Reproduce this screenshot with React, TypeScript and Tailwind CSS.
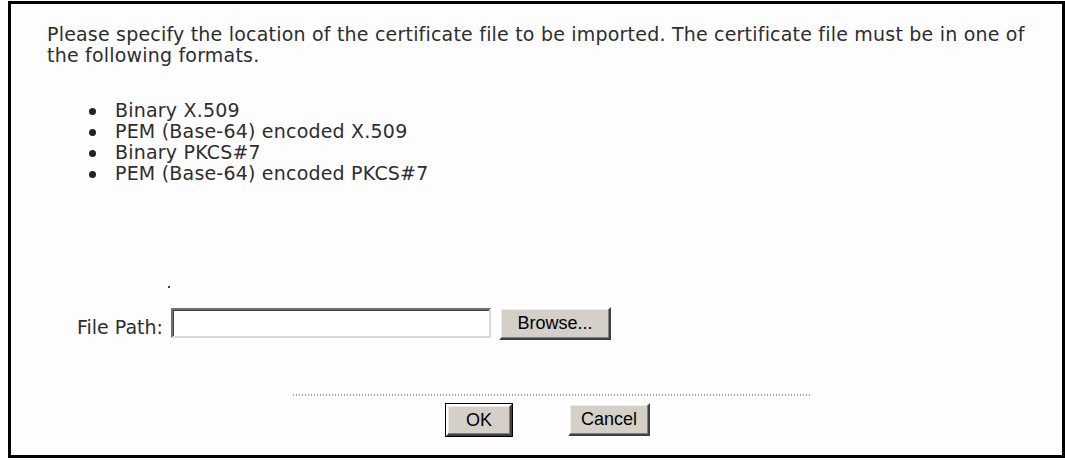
export default function App() {
  const formats = [
    "Binary X.509",
    "PEM (Base-64) encoded X.509",
    "Binary PKCS#7",
    "PEM (Base-64) encoded PKCS#7",
  ];

  // classic win98 style bevels
  const raised =
    "border-t-white border-l-white border-r-[#404040] border-b-[#404040] shadow-[inset_-1px_-1px_0_#808080,inset_1px_1px_0_#ecebe6]";

  return (
    <div className="w-[1065px] h-[460px] bg-white pt-[1px] pl-[8px]">
      <div
        className="w-[1057px] h-[457px] border-[3px] border-black bg-[#fdfdfd] text-[#2e2e2e] flex flex-col"
        style={{ fontFamily: "'DejaVu Sans', Verdana, sans-serif" }}
      >
        {/* Intro */}
        <p className="pl-[36px] pr-[36px] pt-[20px] text-[19px] leading-[21px] tracking-[0.2px]">
          Please specify the location of the certificate file to be imported. The certificate file must be in one of
          the following formats.
        </p>

        {/* Format list */}
        <ul className="mt-[34px] pl-[78px] text-[19px] leading-[21px] tracking-[0.2px]">
          {formats.map((f) => (
            <li key={f} className="flex items-start">
              <span className="mt-[8px] w-[7px] h-[7px] rounded-full bg-[#222]" />
              <span className="ml-[19px]">{f}</span>
            </li>
          ))}
        </ul>

        {/* stray dot */}
        <div className="mt-[102px] pl-[157px] h-[2px]">
          <div className="w-[2px] h-[2px] bg-[#444]" />
        </div>

        {/* File Path row */}
        <div className="mt-[19px] pl-[66px] flex items-start">
          <span className="mt-[10px] text-[19px] leading-[21px]">File Path:</span>
          <div className="ml-[8px] mt-[1px] w-[320px] h-[30px] bg-white border-2 border-t-[#707070] border-l-[#707070] border-r-[#dcdad4] border-b-[#dcdad4] shadow-[inset_1px_1px_0_#404040]" />
          <button
            className={`ml-[8px] w-[112px] h-[33px] bg-[#d4d0c8] border-2 ${raised} text-[18px] text-black`}
            style={{ fontFamily: "'Liberation Sans', Arial, sans-serif" }}
          >
            Browse...
          </button>
        </div>

        {/* Divider */}
        <div className="mt-[54px] ml-[282px] w-[517px] h-[2px] bg-[repeating-linear-gradient(90deg,#a4a4a4_0_1px,transparent_1px_3px)]" />

        {/* Buttons */}
        <div
          className="mt-[7px] pl-[434px] flex items-start gap-[55px]"
          style={{ fontFamily: "'Liberation Sans', Arial, sans-serif" }}
        >
          <div className="border border-black">
            <button className={`w-[66px] h-[32px] bg-[#d4d0c8] border-2 ${raised} text-[18px] text-black`}>OK</button>
          </div>
          <button className={`w-[82px] h-[33px] bg-[#d4d0c8] border-2 ${raised} text-[18px] text-black`}>
            Cancel
          </button>
        </div>
      </div>
    </div>
  );
}
